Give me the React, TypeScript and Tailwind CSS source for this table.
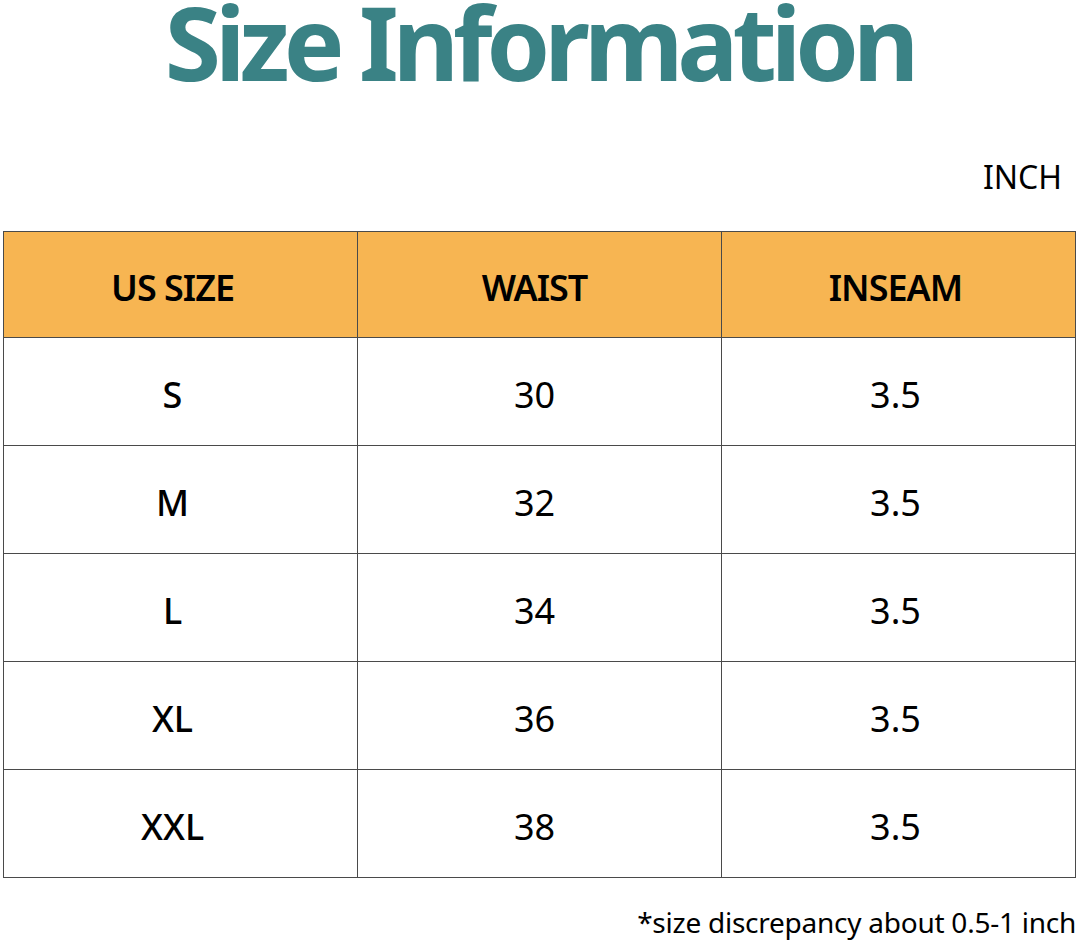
const rows = [
  { size: 'S', waist: '30', inseam: '3.5' },
  { size: 'M', waist: '32', inseam: '3.5' },
  { size: 'L', waist: '34', inseam: '3.5' },
  { size: 'XL', waist: '36', inseam: '3.5' },
  { size: 'XXL', waist: '38', inseam: '3.5' },
]

export default function App() {
  return (
    <div className="h-[944px] w-[1080px] overflow-hidden bg-white font-['Noto_Sans',sans-serif] text-black">
      {/* Title */}
      <h1 className="pr-[2px] text-center text-[102px] font-bold leading-[84px] tracking-[-6px] text-[#3a8285]">
        Size Information
      </h1>

      <p className="mt-[73px] pr-[18px] text-right text-[32px] leading-[40px]">INCH</p>

      {/* Table */}
      <div className="ml-[3px] mt-[34px] w-[1073px] border border-[#4a4a4a]">
        <div className="grid h-[105px] grid-cols-[354px_364px_1fr] bg-[#f7b552]">
          <div className="flex items-center justify-center border-r border-[#4a4a4a] pt-[6px] pr-[16px] text-[36px] font-semibold tracking-[-1px]">US SIZE</div>
          <div className="flex items-center justify-center border-r border-[#4a4a4a] pt-[6px] pr-[10px] text-[36px] font-semibold tracking-[-1px]">WAIST</div>
          <div className="flex items-center justify-center pt-[6px] pr-[6px] text-[36px] font-semibold tracking-[-1px]">INSEAM</div>
        </div>
        {rows.map(r => (
          <div key={r.size} className="grid h-[108px] grid-cols-[354px_364px_1fr] border-t border-[#4a4a4a]">
            <div className="flex items-center justify-center border-r border-[#4a4a4a] pt-[6px] pr-[16px] text-[36px] font-medium">{r.size}</div>
            <div className="flex items-center justify-center border-r border-[#4a4a4a] pt-[6px] pr-[10px] text-[36px]">{r.waist}</div>
            <div className="flex items-center justify-center pt-[6px] pr-[6px] text-[36px]">{r.inseam}</div>
          </div>
        ))}
      </div>

      <p className="mt-[24px] pr-[4px] text-right text-[28px] leading-[40px] tracking-[-0.25px]">
        *size discrepancy about 0.5-1 inch
      </p>
    </div>
  )
}
